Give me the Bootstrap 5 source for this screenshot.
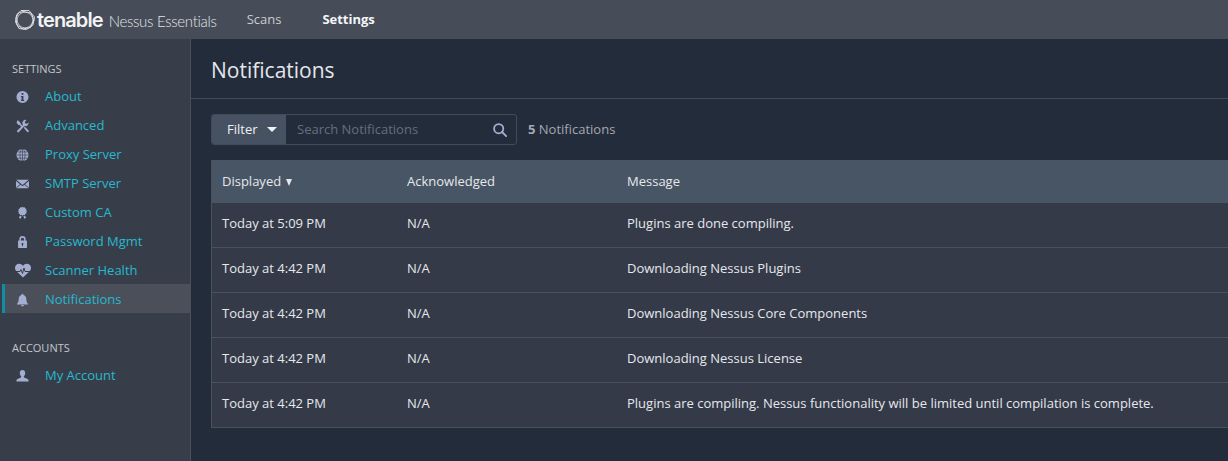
<!DOCTYPE html>
<html lang="en">
<head>
    <meta charset="UTF-8">
    <title>Nessus Essentials - Notifications</title>
    <link rel="stylesheet" href="https://cdn.jsdelivr.net/npm/bootstrap@5.3.0/dist/css/bootstrap.min.css">
    <style>
        html, body { height: 100%; }
        body {
            background: #232c3b;
            font-family: "Open Sans", sans-serif;
            font-size: 13px;
            color: #e6e8ec;
            overflow: hidden;
        }
        .top-bar { height: 39px; background: #464d58; padding-left: 14px; }
        .logo-word { font-family: Inter, sans-serif; font-weight: 600; font-size: 20px; letter-spacing: -.9px; color: #f2f3f5; line-height: 1; margin-left: 1px; }
        .logo-product { font-family: Lato, sans-serif; font-weight: 300; font-size: 15px; letter-spacing: -.3px; color: #e2e4e8; margin-left: 6px; line-height: 1; padding-top: 3px; }
        .top-link { color: #c9ccd1; text-decoration: none; }
        .top-scans { margin-left: 30px; }
        .top-settings { margin-left: 41px; color: #f4f5f6; font-weight: 700; }
        .page-body { height: 422px; }
        .side-bar { width: 191px; flex: none; background: #383e49; border-right: 1px solid #4a505b; padding-top: 22px; }
        .side-title { font-size: 11px; color: #c3c6cb; text-transform: uppercase; padding-left: 12px; line-height: 15px; height: 15px; }
        .side-title-2 { margin-top: 27px; }
        .side-list { margin-top: 5px; }
        .side-item { display: flex; align-items: center; height: 29px; padding: 2px 0 0 14px; color: #26b9cf; text-decoration: none; margin-left: 2px; }
        .side-item svg { width: 13px; height: 14px; fill: #a3aed0; flex: none; margin-right: 16px; }
        .side-item .heart-icon { width: 18px; height: 15px; margin-left: -2px; margin-right: 13px; }
        .side-item.is-active { background: #4a4f5a; box-shadow: inset 3px 0 0 #0e8fa3; }
        .main-pane { flex: 1; min-width: 0; overflow: hidden; }
        .pane-head { height: 60px; border-bottom: 1px solid #434a56; padding-left: 20px; font-size: 21px; color: #e4e6ea; line-height: 63px; }
        .tool-row { margin: 15px 0 15px 20px; height: 31px; }
        .filter-box { width: 306px; height: 31px; border: 1px solid #434b58; border-radius: 3px; }
        .filter-btn { width: 74px; background: #465261; color: #eef0f2; font-size: 13px; border: 0; padding: 0 0 0 15px; border-radius: 2px 0 0 2px; }
        .filter-caret { display: inline-block; border: 5px solid transparent; border-top-color: #f2f3f5; border-bottom: 0; margin-left: 9px; vertical-align: 2px; }
        .filter-input { background: transparent; border: 0; outline: 0; color: #e6e8ec; font-size: 13px; padding: 0 0 0 11px; min-width: 0; flex: 1; }
        .filter-input::placeholder { color: #666e7b; opacity: 1; }
        .search-icon { width: 14px; height: 14px; margin-right: 9px; align-self: center; }
        .count-note { margin-left: 11px; color: #a3a8b0; }
        .table-wrap { margin-left: 20px; margin-right: -40px; border-left: 1px solid #4a515d; border-bottom: 1px solid #4a515d; }
        .note-table { width: 100%; table-layout: fixed; color: #e6e8ec; margin: 0; }
        .note-table th, .note-table td { background: #343a48; color: inherit; border: 0; font-weight: 400; padding: 0 0 0 10px; vertical-align: middle; box-shadow: none; }
        .note-table thead th { background: #485564; height: 43px; }
        .note-table tbody td { height: 45px; padding-bottom: 2px; border-bottom: 1px solid #4a515d; }
        .note-table tbody tr:first-child td { height: 44px; }
        .note-table tbody tr:last-child td { border-bottom: 0; }
        .col-shown { width: 185px; }
        .col-ack { width: 220px; }
        .sort-caret { display: inline-block; border: 3.5px solid transparent; border-top: 7px solid #e6e8ec; border-bottom: 0; margin-left: 1px; vertical-align: 0; }
    </style>
</head>
<body>
    <nav class="top-bar d-flex align-items-center">
        <svg width="22" height="22" viewBox="0 0 22 22" fill="none" stroke="#e8e9ec" stroke-width=".9">
            <path d="M7 1.500 15 1.500 20.500 8 19 16 12.500 20.500 5 19.500 1.500 13 2.500 6Z"/>
            <path d="M9 2.500 17 4 20 11 16.500 18.500 9 20 3 16 2 9 4.500 4Z"/>
            <circle cx="11" cy="11" r="7.800" stroke-width=".7"/>
        </svg>
        <span class="logo-word">tenable</span>
        <span class="logo-product">Nessus Essentials</span>
        <a href="#" class="top-link top-scans">Scans</a>
        <a href="#" class="top-link top-settings">Settings</a>
    </nav>

    <div class="page-body d-flex">
        <aside class="side-bar">
            <div class="side-title">Settings</div>
            <div class="side-list">
                <a href="#" class="side-item">
                    <svg viewBox="0 0 14 14"><path fill-rule="evenodd" d="M7 .5a6.500 6.500 0 1 0 0 13 6.500 6.500 0 0 0 0-13ZM6 2.800h2v1.900H6ZM5.300 5.800H8v4.300h.8v1.200H5.300v-1.200H6V7H5.300Z"/></svg>
                    About
                </a>
                <a href="#" class="side-item">
                    <svg viewBox="0 0 14 14"><path d="M1.800.6 5 3.700v1.100l2 2-1.200 1.200-2-2H2.700L.6 3.500ZM13.500 3.300a3.500 3.500 0 0 1-4.400 3.800L3.400 13.300a1.200 1.200 0 0 1-2-1.500l6.100-5.900A3.500 3.500 0 0 1 11.300.5L9.500 2.400l.4 1.800 1.800.4ZM8.300 9l1.200-1.200 3.900 3.800c.6.600.6 1.200.1 1.700s-1.100.5-1.700-.1Z"/></svg>
                    Advanced
                </a>
                <a href="#" class="side-item">
                    <svg viewBox="0 0 14 14"><circle cx="7" cy="7" r="6.500"/><g fill="none" stroke="#383e49" stroke-width=".7"><ellipse cx="7" cy="7" rx="2.800" ry="6.500"/><path d="M7 .5v13M.5 7h13M1.500 3.700h11M1.500 10.300h11"/></g></svg>
                    Proxy Server
                </a>
                <a href="#" class="side-item">
                    <svg viewBox="0 0 14 14"><path d="M.3 2.500h13.400L7 8ZM0 3.800 4.300 7.300 0 11ZM14 3.800 9.700 7.300 14 11ZM5 7.900 7 9.500l2-1.600 4.700 3.700H.3Z"/></svg>
                    SMTP Server
                </a>
                <a href="#" class="side-item">
                    <svg viewBox="0 0 14 14"><path d="M7 .3l1.100.8 1.300-.2.600 1.200 1.200.6-.2 1.300.8 1.100-.8 1.100.2 1.300-1.200.6-.6 1.200-1.300-.2L7 9.900l-1.100-.8-1.300.2-.6-1.200-1.200-.6.2-1.300L2.200 5.100 3 4l-.2-1.300L4 2.100l.6-1.200 1.300.2ZM4.300 10l1.900.4-1.700 3.300-.5-1.200H2.900ZM9.700 10l-1.900.4 1.700 3.300.5-1.200h1.100Z"/></svg>
                    Custom CA
                </a>
                <a href="#" class="side-item">
                    <svg viewBox="0 0 14 14"><path fill-rule="evenodd" d="M3.600 5.500V4a3.400 3.400 0 0 1 6.800 0v1.500h.9c.3 0 .5.200.5.500v7c0 .3-.2.500-.5.500H2.700a.5.500 0 0 1-.5-.5V6c0-.3.200-.5.500-.5ZM5.300 5.500h3.400V4a1.700 1.700 0 0 0-3.400 0ZM7 8a1 1 0 0 0-.5 1.900V11.500h1V9.900A1 1 0 0 0 7 8Z"/></svg>
                    Password Mgmt
                </a>
                <a href="#" class="side-item">
                    <svg class="heart-icon" viewBox="0 0 18 14"><path d="M9 14 2.400 7.700C1.400 6.700 1 5.600 1 4.300 1 2 2.800.3 5 .3 6.700.3 8.100 1.100 9 2.500 9.900 1.100 11.300.3 13 .3c2.200 0 4 1.700 4 4 0 1.300-.4 2.400-1.400 3.400Z"/><path d="M0 8h6l1-2 1.500 4 1.500-5.500L11 8h7" fill="none" stroke="#383e49" stroke-width="1"/></svg>
                    Scanner Health
                </a>
                <a href="#" class="side-item is-active">
                    <svg viewBox="0 0 14 14"><path d="M7 .4c.6 0 1 .4 1 1v.3c2 .5 3.100 2.100 3.100 4.300 0 2.700.7 4 1.900 5.200v.6H1v-.6C2.200 10 2.900 8.700 2.900 6c0-2.200 1.100-3.800 3.100-4.300v-.3c0-.6.400-1 1-1ZM5.500 12.500h3a1.500 1.500 0 0 1-3 0Z"/></svg>
                    Notifications
                </a>
            </div>
            <div class="side-title side-title-2">Accounts</div>
            <div class="side-list">
                <a href="#" class="side-item">
                    <svg viewBox="0 0 14 14"><path d="M7 .5c1.800 0 2.900 1.300 2.900 3.200 0 1.400-.5 2.700-1.300 3.500-.3.300-.3 1 .2 1.300l3.500 1.700c.7.300 1.200.9 1.200 1.600v1.200H.5v-1.200c0-.7.500-1.300 1.200-1.600l3.500-1.700c.5-.3.500-1 .2-1.300-.8-.8-1.300-2.100-1.300-3.500C4.100 1.800 5.200.5 7 .5Z"/></svg>
                    My Account
                </a>
            </div>
        </aside>

        <main class="main-pane">
            <div class="pane-head">Notifications</div>
            <div class="tool-row d-flex align-items-center">
                <div class="filter-box d-flex">
                    <button class="filter-btn text-start" type="button">Filter<span class="filter-caret"></span></button>
                    <input class="filter-input" type="text" placeholder="Search Notifications">
                    <svg class="search-icon" viewBox="0 0 14 14" fill="none" stroke="#a3aed0" stroke-width="1.800"><circle cx="5.700" cy="5.700" r="4.600"/><path d="M9 9l4.200 4.200" stroke-linecap="round"/></svg>
                </div>
                <span class="count-note"><b>5</b> Notifications</span>
            </div>
            <div class="table-wrap">
                <table class="table note-table">
                    <thead>
                        <tr>
                            <th class="col-shown">Displayed <span class="sort-caret"></span></th>
                            <th class="col-ack">Acknowledged</th>
                            <th>Message</th>
                        </tr>
                    </thead>
                    <tbody>
                        <tr><td>Today at 5:09 PM</td><td>N/A</td><td>Plugins are done compiling.</td></tr>
                        <tr><td>Today at 4:42 PM</td><td>N/A</td><td>Downloading Nessus Plugins</td></tr>
                        <tr><td>Today at 4:42 PM</td><td>N/A</td><td>Downloading Nessus Core Components</td></tr>
                        <tr><td>Today at 4:42 PM</td><td>N/A</td><td>Downloading Nessus License</td></tr>
                        <tr><td>Today at 4:42 PM</td><td>N/A</td><td>Plugins are compiling. Nessus functionality will be limited until compilation is complete.</td></tr>
                    </tbody>
                </table>
            </div>
        </main>
    </div>

    <script src="https://cdn.jsdelivr.net/npm/bootstrap@5.3.0/dist/js/bootstrap.bundle.min.js"></script>
</body>
</html>
